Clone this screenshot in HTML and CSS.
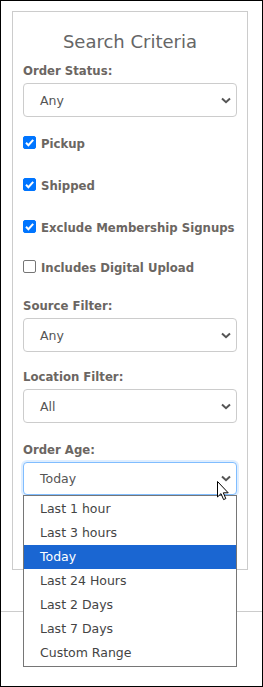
FILE: index.html
```html
<!DOCTYPE html>
<html>
<head>
<meta charset="utf-8">
<link rel="stylesheet" href="styles.css">
</head>
<body>
<div class="frame">
  <div class="wrap">
    <div class="panel">
      <h2 class="title">Search Criteria</h2>
      <div class="field">
        <label class="lbl">Order Status:</label>
        <div class="sel"><span>Any</span><svg class="chev" width="10" height="7" viewBox="0 0 10 7"><path d="M1 1.5 L5 5.2 L9 1.5" fill="none" stroke="#555" stroke-width="2"/></svg></div>
      </div>
      <div class="check"><span class="cb on"><svg width="13" height="13" viewBox="0 0 13 13"><path d="M3 6.8 L5.4 9.2 L10.2 3.8" fill="none" stroke="#fff" stroke-width="2"/></svg></span><span class="ctext">Pickup</span></div>
      <div class="check"><span class="cb on"><svg width="13" height="13" viewBox="0 0 13 13"><path d="M3 6.8 L5.4 9.2 L10.2 3.8" fill="none" stroke="#fff" stroke-width="2"/></svg></span><span class="ctext">Shipped</span></div>
      <div class="check"><span class="cb on"><svg width="13" height="13" viewBox="0 0 13 13"><path d="M3 6.8 L5.4 9.2 L10.2 3.8" fill="none" stroke="#fff" stroke-width="2"/></svg></span><span class="ctext">Exclude Membership Signups</span></div>
      <div class="check last"><span class="cb"></span><span class="ctext">Includes Digital Upload</span></div>
      <div class="field f2">
        <label class="lbl">Source Filter:</label>
        <div class="sel"><span>Any</span><svg class="chev" width="10" height="7" viewBox="0 0 10 7"><path d="M1 1.5 L5 5.2 L9 1.5" fill="none" stroke="#555" stroke-width="2"/></svg></div>
      </div>
      <div class="field f3">
        <label class="lbl">Location Filter:</label>
        <div class="sel"><span>All</span><svg class="chev" width="10" height="7" viewBox="0 0 10 7"><path d="M1 1.5 L5 5.2 L9 1.5" fill="none" stroke="#555" stroke-width="2"/></svg></div>
      </div>
      <div class="field age">
        <label class="lbl">Order Age:</label>
        <div class="sel focus"><span>Today</span><svg class="chev" width="10" height="7" viewBox="0 0 10 7"><path d="M1 1.5 L5 5.2 L9 1.5" fill="none" stroke="#555" stroke-width="2"/></svg></div>
        <ul class="menu">
          <li>Last 1 hour</li>
          <li>Last 3 hours</li>
          <li class="hl">Today</li>
          <li>Last 24 Hours</li>
          <li>Last 2 Days</li>
          <li>Last 7 Days</li>
          <li>Custom Range</li>
        </ul>
        <svg class="cursor" width="13" height="20" viewBox="0 0 13 20"><path d="M0.5 0.5 L0.5 16 L4 12.6 L6.6 18.6 L8.8 17.6 L6.3 11.8 L11.2 11.8 Z" fill="#fff" stroke="#000" stroke-width="1" stroke-linejoin="round"/></svg>
      </div>
    </div>
  </div>
</div>
</body>
</html>
```

FILE: styles.css
```css
* { box-sizing: border-box; }
html, body { margin: 0; padding: 0; background: #fff; }
body { font-family: "DejaVu Sans", Verdana, sans-serif; color: #666; }
.frame {
  width: 263px;
  height: 687px;
  border: 1px solid #000;
  overflow: hidden;
}
.wrap {
  border-bottom: 1px solid #ccc;
  padding: 10px 14px 41px 11px;
  height: 611px;
}
.panel {
  border: 1px solid #ccc;
  padding: 0 10px 0 10px;
  height: 559px;
}
.title {
  margin: 0;
  padding-top: 19px;
  height: 50px;
  font-size: 18px;
  font-weight: normal;
  text-align: center;
  color: #666;
  line-height: 22px;
}
.field { display: flex; flex-direction: column; }
.lbl {
  font-family: "DejaVu Sans Condensed", "DejaVu Sans", sans-serif;
  font-stretch: condensed;
  font-weight: bold;
  font-size: 13px;
  line-height: 18px;
  height: 21px;
  color: #6b6662;
  white-space: nowrap;
}
.sel {
  height: 34px;
  border: 1px solid #ccc;
  border-radius: 4px;
  display: flex;
  align-items: center;
  justify-content: space-between;
  padding: 0 5px 0 16px;
  font-size: 12.5px;
  color: #555;
  background: #fff;
}
.sel.focus {
  border-color: #80bdff;
  box-shadow: 0 0 0 2px rgba(128,189,255,0.25);
  height: 33px;
}
.check {
  display: flex;
  align-items: center;
  height: 42px;
  margin-top: 5px;
  margin-bottom: -5px;
}
.check.last { margin-top: 3px; margin-bottom: -3px; }
.cb {
  flex: none;
  width: 13px;
  height: 13px;
  border: 1px solid #767676;
  border-radius: 2px;
  margin-right: 5px;
  margin-top: -2px;
  display: inline-flex;
}
.cb.on { background: #0075ff; border-color: #0075ff; }
.cb.on svg { margin: -1px; }
.ctext {
  font-family: "DejaVu Sans Condensed", "DejaVu Sans", sans-serif;
  font-stretch: condensed;
  font-weight: bold;
  font-size: 13px;
  color: #6b6662;
  white-space: nowrap;
}
.f2 { margin-top: 12px; }
.f3 { margin-top: 16px; }
.age { position: relative; margin-top: 18px; }
.menu {
  position: absolute;
  left: 0;
  right: 0;
  top: 54px;
  margin: 0;
  padding: 1px 0;
  list-style: none;
  background: #fff;
  border: 1px solid #767676;
  font-size: 12.5px;
  color: #444;
}
.menu li {
  height: 24px;
  line-height: 24px;
  padding-left: 16px;
}
.menu li.hl { background: #1a66d2; color: #fff; }
.cursor { position: absolute; left: 194px; top: 40px; }
```
